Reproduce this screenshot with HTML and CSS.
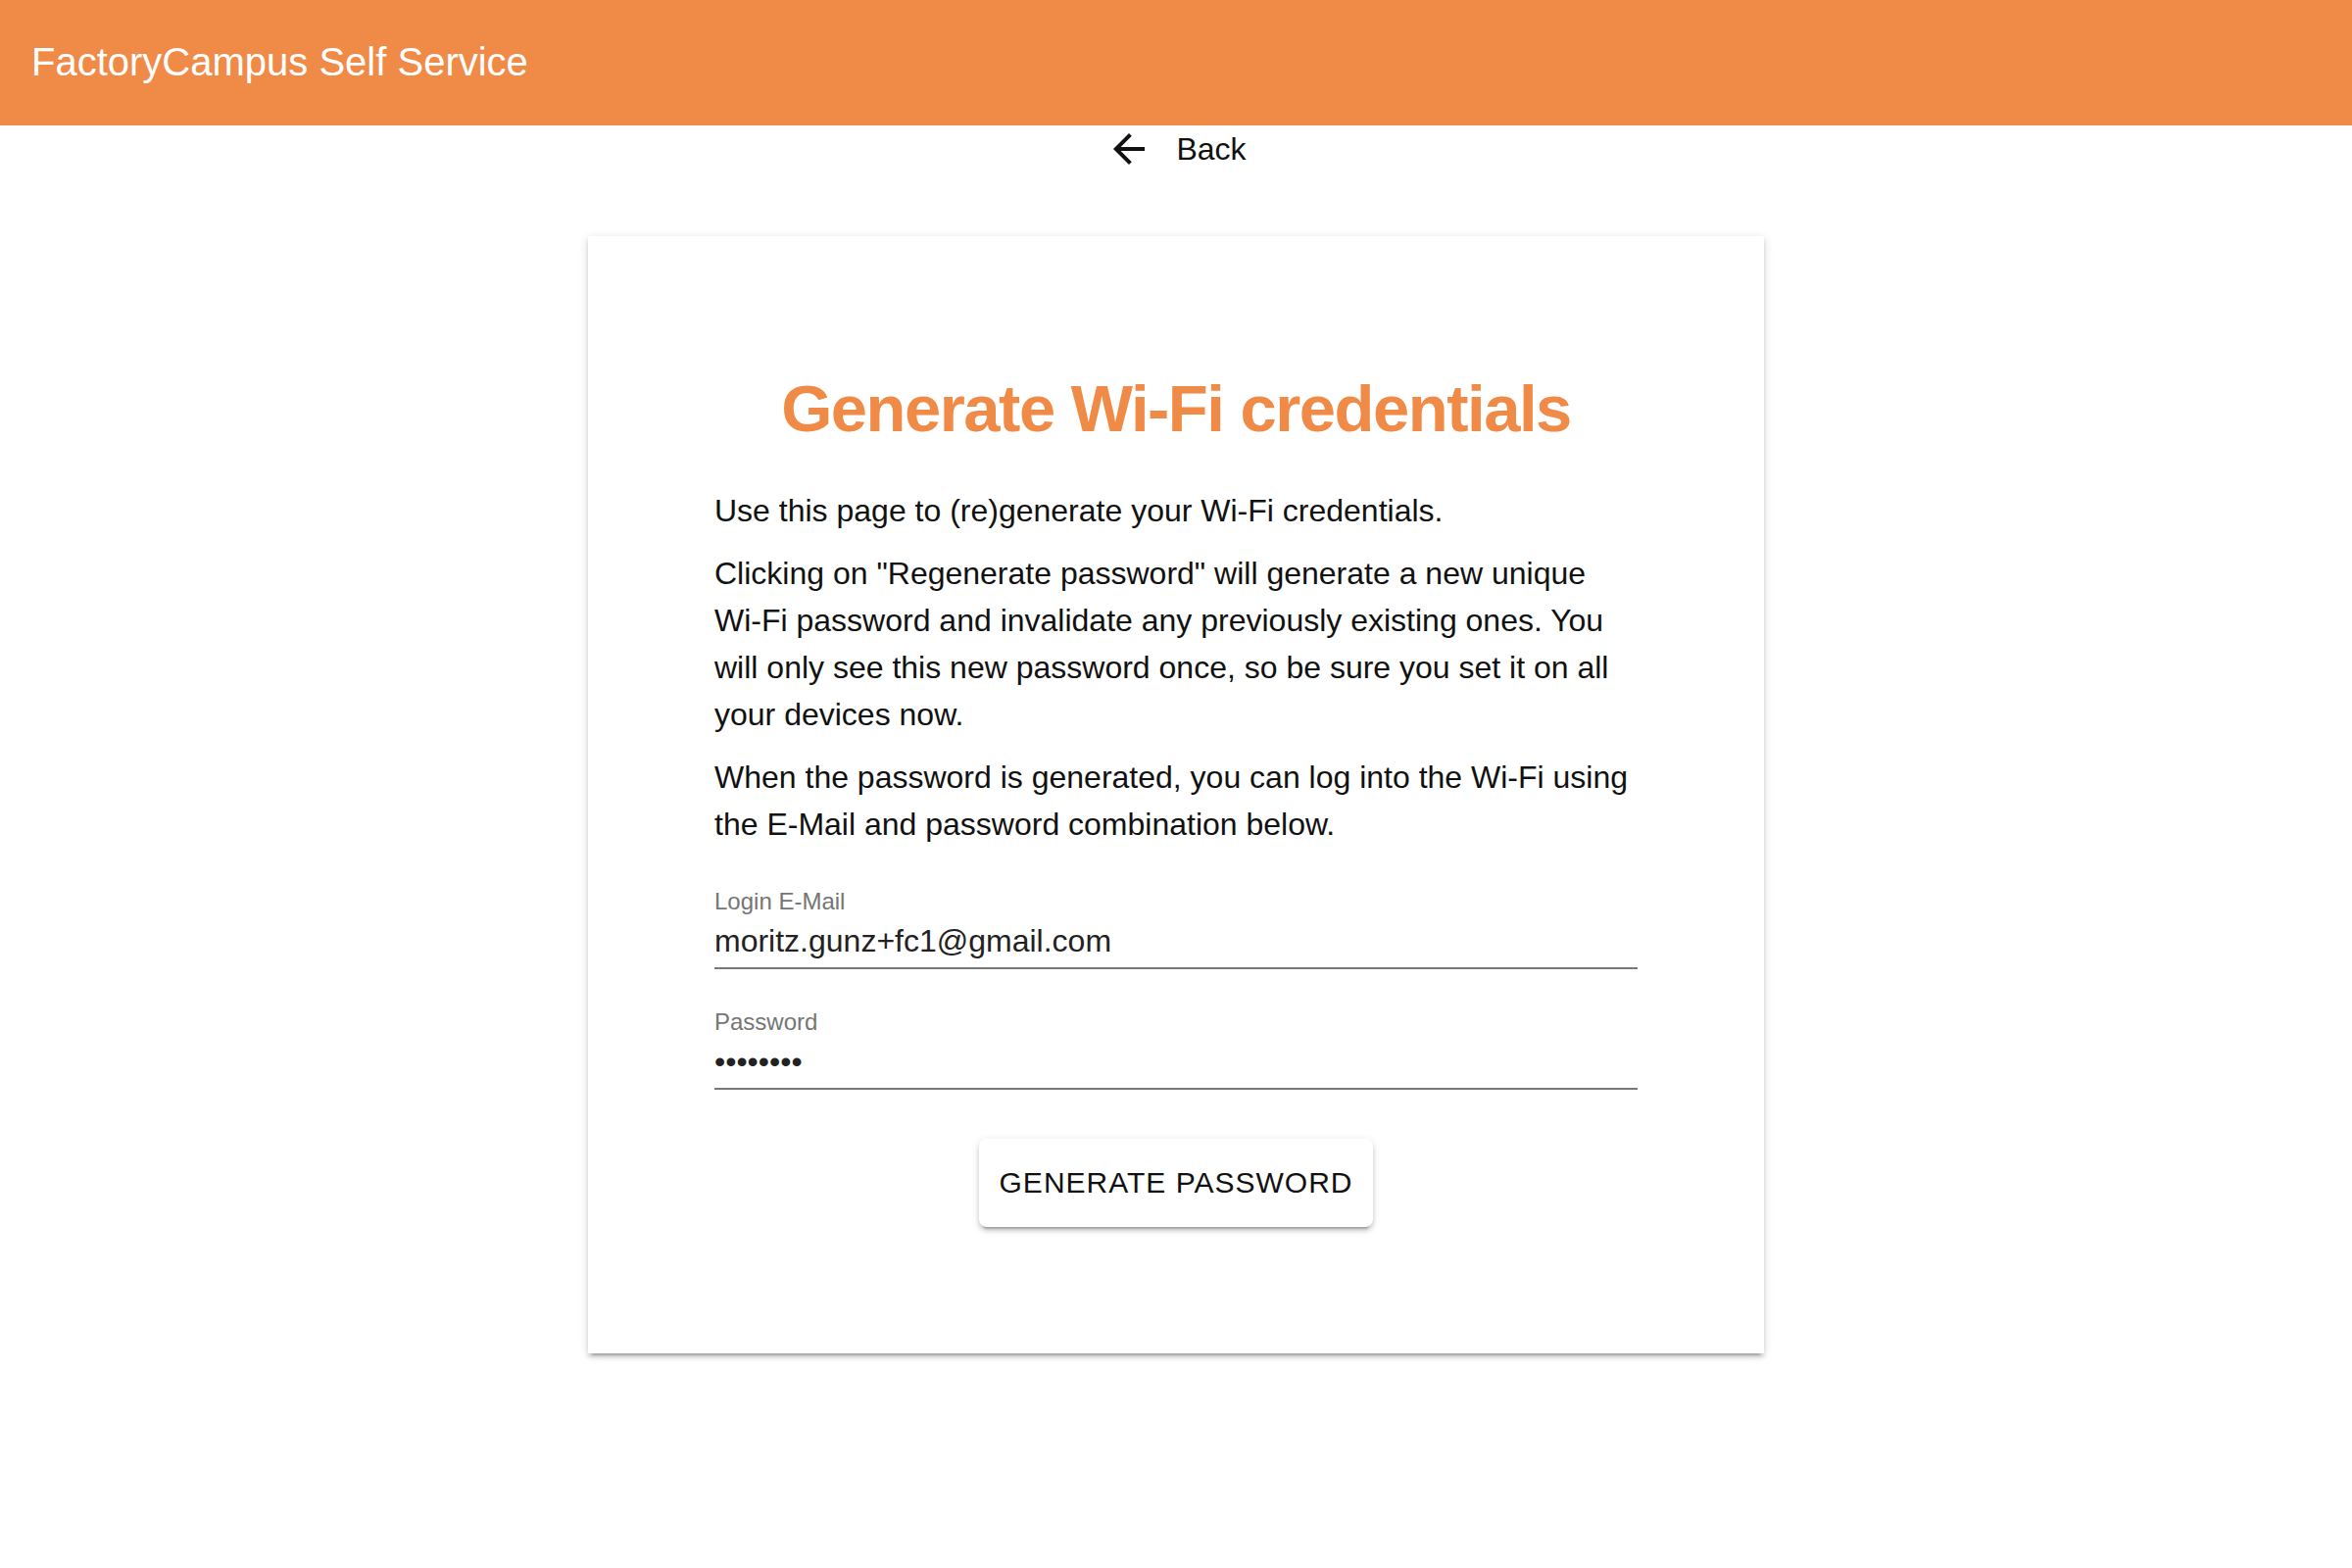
FILE: index.html
```html
<!DOCTYPE html>
<html lang="en">
<head>
<meta charset="utf-8">
<title>FactoryCampus Self Service</title>
<link rel="stylesheet" href="styles.css">
</head>
<body>
<header class="appbar">
  <h1 class="appbar-title">FactoryCampus Self Service</h1>
</header>
<main class="main">
  <button class="back" type="button">
    <svg class="back-icon" viewBox="0 0 24 24" aria-hidden="true"><path d="M20 11H7.83l5.59-5.59L12 4l-8 8 8 8 1.41-1.41L7.83 13H20v-2z"/></svg>
    <span class="back-label">Back</span>
  </button>
  <section class="card">
    <h2 class="card-title">Generate Wi-Fi credentials</h2>
    <p class="text">Use this page to (re)generate your Wi-Fi credentials.</p>
    <p class="text">Clicking on "Regenerate password" will generate a new unique Wi-Fi password and invalidate any previously existing ones. You will only see this new password once, so be sure you set it on all your devices now.</p>
    <p class="text">When the password is generated, you can log into the Wi-Fi using the E-Mail and password combination below.</p>
    <div class="fields">
      <label class="field">
        <span class="field-label">Login E-Mail</span>
        <input class="field-input" type="text" value="moritz.gunz+fc1@gmail.com" readonly>
      </label>
      <label class="field">
        <span class="field-label">Password</span>
        <input class="field-input" type="password" value="12345678" readonly>
      </label>
    </div>
    <div class="actions">
      <button class="generate" type="button">Generate password</button>
    </div>
  </section>
</main>
</body>
</html>
```

FILE: styles.css
```css
* { box-sizing: border-box; }

html, body {
  margin: 0;
  padding: 0;
  background: #ffffff;
}

body {
  font-family: "Liberation Sans", Arial, Helvetica, sans-serif;
  color: #1a1a1a;
}

.appbar {
  height: 128px;
  background: #f08a47;
  display: flex;
  align-items: center;
  padding: 0 32px 2px;
}

.appbar-title {
  margin: 0;
  font-size: 40px;
  font-weight: 400;
  color: #ffffff;
  line-height: 1;
}

.main {
  display: flex;
  flex-direction: column;
  align-items: center;
  padding-top: 0;
  padding-bottom: 100px;
}

.back {
  display: flex;
  align-items: center;
  gap: 24px;
  background: none;
  border: 0;
  padding: 0;
  margin: 0;
  font-family: inherit;
  font-size: 32px;
  color: #111111;
  cursor: pointer;
}

.back-icon {
  width: 48px;
  height: 48px;
  fill: #111111;
  display: block;
}

.back-label {
  line-height: 37px;
}

.card {
  margin-top: 65px;
  width: 1200px;
  background: #ffffff;
  padding: 136px 129px 129px;
  box-shadow: 0 6px 2px -4px rgba(0,0,0,0.2), 0 4px 4px 0 rgba(0,0,0,0.14), 0 2px 10px 0 rgba(0,0,0,0.12);
}

.card-title {
  margin: 0 0 40px;
  text-align: center;
  font-size: 67px;
  line-height: 80px;
  font-weight: 700;
  letter-spacing: -1.5px;
  color: #f08a47;
}

.text {
  margin: 0 0 16px;
  font-size: 32px;
  line-height: 48px;
  color: #111111;
}

.fields {
  margin-top: 43px;
  display: flex;
  flex-direction: column;
  gap: 42px;
}

.field {
  display: flex;
  flex-direction: column;
}

.field-label {
  font-size: 24px;
  line-height: 24px;
  color: #757575;
}

.field-input {
  display: block;
  width: 100%;
  height: 57px;
  margin: 0;
  padding: 11px 0 9px;
  border: 0;
  border-bottom: 2px solid #787878;
  background: transparent;
  font-family: inherit;
  font-size: 32px;
  line-height: 37px;
  color: #222222;
  outline: none;
}

.actions {
  margin-top: 50px;
  display: flex;
  justify-content: center;
}

.generate {
  height: 90px;
  padding: 0 21px;
  border: 0;
  border-radius: 8px;
  background: #ffffff;
  font-family: inherit;
  font-size: 30px;
  letter-spacing: 1px;
  text-transform: uppercase;
  color: #111111;
  cursor: pointer;
  box-shadow: 0 6px 2px -4px rgba(0,0,0,0.2), 0 4px 4px 0 rgba(0,0,0,0.14), 0 2px 10px 0 rgba(0,0,0,0.12);
}
```
